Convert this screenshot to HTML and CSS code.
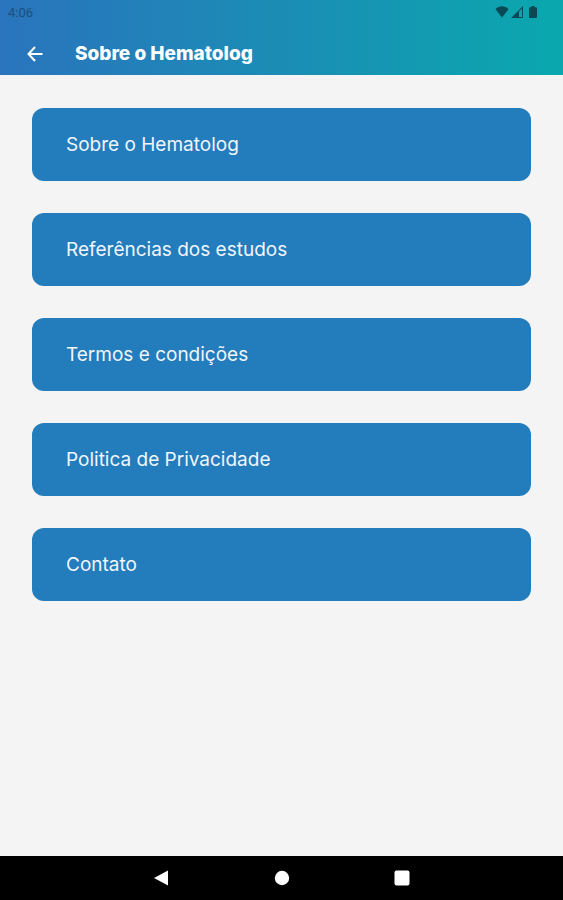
FILE: index.html
```html
<!DOCTYPE html>
<html lang="pt-BR">
<head>
  <meta charset="UTF-8" />
  <meta name="viewport" content="width=device-width, initial-scale=1.0"/>
  <title>Sobre o Hematolog</title>
  <link rel="stylesheet" href="styles.css">
</head>
<body>
  <header class="header">
    <!-- Status bar -->
    <div class="status-bar">
      <span class="clock">4:06</span>
      <div class="status-icons">
        <svg width="14" height="12" viewBox="0 0 14 12"><path d="M0.500 3.200C4 -0.600 10 -0.600 13.500 3.200L7 11.600Z"/></svg>
        <svg width="12" height="12" viewBox="0 0 12 12"><path d="M0 12L12 0V12ZM8 5.400V11H11V2.400Z" fill-rule="evenodd"/></svg>
        <svg class="battery" width="8" height="12" viewBox="0 0 8 12"><path d="M2.400 0h3.200v1.200H7q1 0 1 1V11q0 1-1 1H1q-1 0-1-1V2.200q0-1 1-1h1.400z"/></svg>
      </div>
    </div>

    <div class="toolbar">
      <button class="back" type="button" aria-label="Voltar">
        <svg width="16" height="16" viewBox="0 0 16 16"><path d="M15.500 8H2M8 1L1.500 8L8 15"/></svg>
      </button>
      <h1>Sobre o Hematolog</h1>
    </div>
  </header>

  <main class="menu">
    <button class="menu-item" type="button">Sobre o Hematolog</button>
    <button class="menu-item" type="button">Referências dos estudos</button>
    <button class="menu-item" type="button">Termos e condições</button>
    <button class="menu-item" type="button">Politica de Privacidade</button>
    <button class="menu-item" type="button">Contato</button>
  </main>

  <!-- System navigation -->
  <nav class="nav-bar">
    <button type="button" aria-label="Voltar">
      <svg width="16" height="16" viewBox="0 0 16 16"><path d="M14 0.500V15.500L0 8Z"/></svg>
    </button>
    <button type="button" aria-label="Início">
      <svg width="16" height="16" viewBox="0 0 16 16"><circle cx="8" cy="8" r="7.200"/></svg>
    </button>
    <button type="button" aria-label="Recentes">
      <svg width="16" height="16" viewBox="0 0 16 16"><rect x="0.500" y="0.500" width="15" height="15" rx="2"/></svg>
    </button>
  </nav>
</body>
</html>
```
FILE: styles.css
```css
body {
  margin: 0;
  min-height: 100vh;
  display: flex;
  flex-direction: column;
  font-family: Inter, "Liberation Sans", sans-serif;
  background: #f4f4f4;
}

button {
  border: none;
  font-family: inherit;
  cursor: pointer;
}

svg {
  display: block;
}

.header {
  background: linear-gradient(90deg, #2a74bd, #1b8db5 50%, #0aa8ae);
}

.status-bar {
  display: flex;
  justify-content: space-between;
  align-items: center;
  height: 24px;
  padding: 0 26px 0 8px;
}

.clock {
  font-family: Roboto, sans-serif;
  font-size: 13px;
  color: #1b4f78;
}

.status-icons {
  display: flex;
  gap: 2px;
  fill: #094953;
}

.battery {
  margin-left: 4px;
}

.toolbar {
  display: flex;
  align-items: center;
  gap: 20px;
  height: 43px;
  padding: 8px 14px 0;
}

.back {
  display: flex;
  align-items: center;
  justify-content: center;
  width: 41px;
  height: 40px;
  padding: 0;
  background: none;
}

.back svg {
  fill: none;
  stroke: #fff;
  stroke-width: 2;
}

.toolbar h1 {
  margin: 0;
  font-size: 19px;
  line-height: 24px;
  font-weight: 800;
  color: #fff;
}

.menu {
  flex: 1;
  display: flex;
  flex-direction: column;
  gap: 32px;
  padding: 33px 32px;
}

.menu-item {
  padding: 24px 34px;
  border-radius: 12px;
  background: #237cbb;
  color: #f0f6fc;
  font-size: 19px;
  line-height: 25px;
  text-align: left;
}

.nav-bar {
  display: flex;
  justify-content: center;
  background: #000;
}

.nav-bar button {
  display: flex;
  justify-content: center;
  width: 120px;
  padding: 14px 0;
  background: none;
}

.nav-bar svg {
  fill: #fff;
}
```
